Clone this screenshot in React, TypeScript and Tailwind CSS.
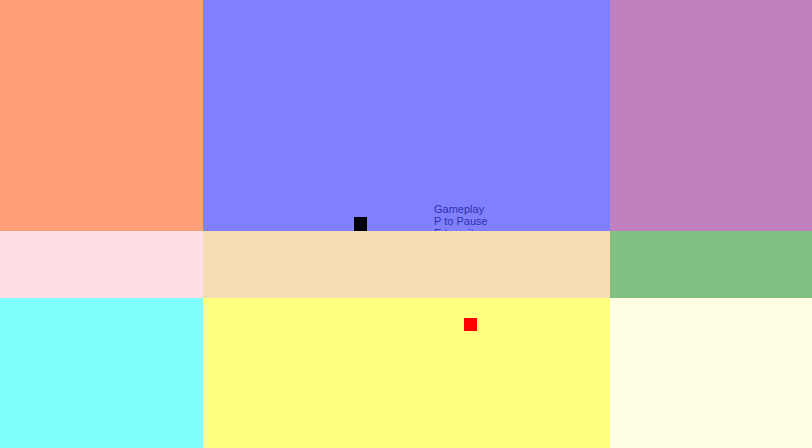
export default function App() {
  return (
    <div className="grid h-[448px] w-[812px] grid-cols-[203px_407px_202px] grid-rows-[231px_67px_150px] overflow-hidden bg-white">
      <div className="bg-[#FFA07A]" />
      <div className="relative overflow-hidden bg-[#8080FF]">
        <div className="absolute left-[151px] top-[217px] h-[14px] w-[13px] bg-black" />
        <div
          className="absolute left-[231px] top-[203px] text-[11px] leading-[12px] text-[#3030a8]"
          style={{ fontFamily: '"Liberation Sans", Arial, sans-serif' }}
        >
          <div>Gameplay</div>
          <div>P to Pause</div>
          <div>E to exit</div>
        </div>
      </div>
      <div className="bg-[#BF80BF]" />
      <div className="bg-[#FFDFE5]" />
      <div className="bg-[#F5DEB3]" />
      <div className="bg-[#80C080]" />
      <div className="bg-[#80FFFF]" />
      <div className="relative bg-[#FFFF80]">
        <div className="absolute left-[261px] top-[20px] h-[13px] w-[13px] bg-[#FF0000]" />
      </div>
      <div className="bg-[#FFFFE6]" />
    </div>
  );
}
